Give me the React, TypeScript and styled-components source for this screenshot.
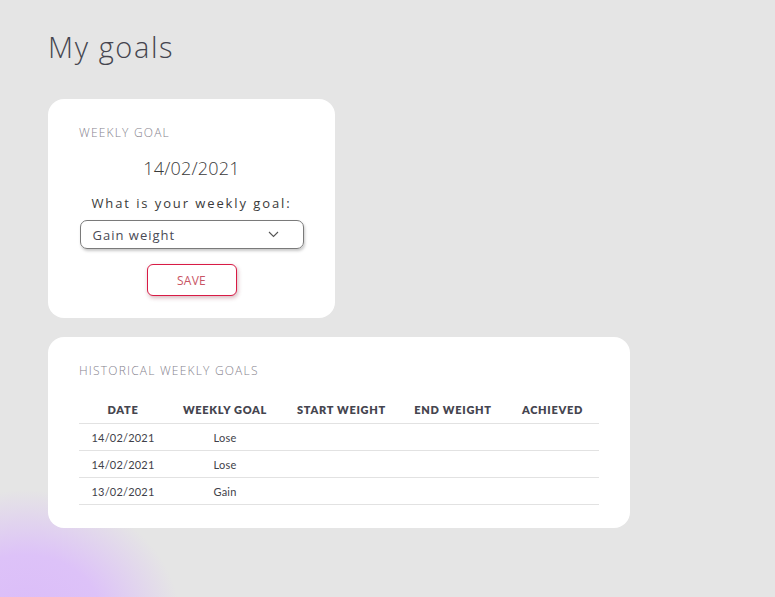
import styled, { createGlobalStyle } from "styled-components";

const GlobalStyle = createGlobalStyle`
    html, body {
        margin: 0;
        padding: 0;
        background: #e5e5e5;
    }
    body {
        font-family: "Open Sans", "Liberation Sans", sans-serif;
        color: #3f3f4a;
    }
`;

const Page = styled.div`
    position: relative;
    width: 775px;
    height: 597px;
    overflow: hidden;
    box-sizing: border-box;
    padding: 28px 0 0 48px;
    display: flex;
    flex-direction: column;
    align-items: flex-start;
`;

const Blob = styled.div`
    position: absolute;
    left: -130px;
    top: 490px;
    width: 310px;
    height: 260px;
    border-radius: 50%;
    background: radial-gradient(closest-side, #dbbcf9 0%, #ddc2f8 50%, rgba(229, 229, 229, 0) 100%);
    pointer-events: none;
`;

const Heading = styled.h1`
    margin: 0 0 33px 0;
    font-family: "Open Sans", sans-serif;
    font-weight: 300;
    font-size: 29px;
    letter-spacing: 1.6px;
    line-height: 38px;
    color: #45454f;
`;

const Card = styled.div<{ $width: number; $bottom: number }>`
    position: relative;
    z-index: 1;
    width: ${p => p.$width}px;
    box-sizing: border-box;
    background: #ffffff;
    border-radius: 16px;
    padding: 26px 31px ${p => p.$bottom}px 31px;
    margin-bottom: 19px;
`;

const CardLabel = styled.div`
    font-size: 12px;
    font-weight: 300;
    letter-spacing: 1.2px;
    color: #86838e;
    line-height: 16px;
`;

const GoalForm = styled.div`
    display: flex;
    flex-direction: column;
    align-items: center;
`;

const DateText = styled.div`
    margin-top: 14px;
    font-size: 18px;
    font-weight: 300;
    letter-spacing: 0.2px;
    color: #3a3a3a;
    line-height: 26px;
`;

const Question = styled.div`
    margin-top: 13px;
    font-size: 13px;
    letter-spacing: 1.9px;
    color: #3a3a3a;
    line-height: 18px;
`;

const Select = styled.div`
    margin-top: 8px;
    width: 224px;
    height: 29px;
    box-sizing: border-box;
    border: 1px solid #7a7a7a;
    border-radius: 7px;
    box-shadow: 1px 2px 3px rgba(0, 0, 0, 0.22);
    display: flex;
    align-items: center;
    justify-content: space-between;
    padding: 0 24px 0 12px;
    font-size: 13px;
    letter-spacing: 1px;
    color: #4a4a55;
`;

const SaveButton = styled.button`
    margin-top: 15px;
    width: 90px;
    height: 32px;
    background: #ffffff;
    border: 1px solid #d81b45;
    border-radius: 6px;
    box-shadow: 1px 2px 4px rgba(120, 20, 40, 0.3);
    font-family: "Open Sans", sans-serif;
    font-size: 12px;
    color: #c95565;
    letter-spacing: 0.3px;
    cursor: pointer;
`;

const Table = styled.table`
    margin-top: 19px;
    width: 520px;
    border-collapse: collapse;
    table-layout: fixed;
`;

const HeadCell = styled.th<{ $width: number }>`
    width: ${p => p.$width}px;
    font-family: Lato, sans-serif;
    font-weight: 800;
    font-size: 11px;
    letter-spacing: 0.7px;
    color: #45454f;
    text-align: center;
    height: 22px;
    padding: 0 0 3px 0;
    border-bottom: 1px solid #e2e2e2;
`;

const Cell = styled.td`
    font-family: Lato, sans-serif;
    font-size: 11px;
    letter-spacing: 0.2px;
    color: #3f3f4a;
    text-align: center;
    height: 26px;
    padding: 0;
    border-bottom: 1px solid #e2e2e2;
`;

const Chevron = () => (
    <svg width="11" height="7" viewBox="0 0 11 7" fill="none">
        <path d="M1 1 L5.5 5.5 L10 1" stroke="#555" strokeWidth="1.1" />
    </svg>
);

const columns = [
    { title: "DATE", width: 88 },
    { title: "WEEKLY GOAL", width: 116 },
    { title: "START WEIGHT", width: 117 },
    { title: "END WEIGHT", width: 106 },
    { title: "ACHIEVED", width: 93 },
];

const history = [
    { date: "14/02/2021", goal: "Lose" },
    { date: "14/02/2021", goal: "Lose" },
    { date: "13/02/2021", goal: "Gain" },
];

export default function App() {
    return (
        <>
            <GlobalStyle />
            <Page>
                <Blob />
                <Heading>My goals</Heading>
                <Card $width={287} $bottom={22}>
                    <CardLabel>WEEKLY GOAL</CardLabel>
                    <GoalForm>
                        <DateText>14/02/2021</DateText>
                        <Question>What is your weekly goal:</Question>
                        <Select>
                            <span>Gain weight</span>
                            <Chevron />
                        </Select>
                        <SaveButton>SAVE</SaveButton>
                    </GoalForm>
                </Card>
                <Card $width={582} $bottom={23}>
                    <CardLabel>HISTORICAL WEEKLY GOALS</CardLabel>
                    <Table>
                        <thead>
                            <tr>
                                {columns.map(c => (
                                    <HeadCell key={c.title} $width={c.width}>{c.title}</HeadCell>
                                ))}
                            </tr>
                        </thead>
                        <tbody>
                            {history.map((row, i) => (
                                <tr key={i}>
                                    <Cell>{row.date}</Cell>
                                    <Cell>{row.goal}</Cell>
                                    <Cell></Cell>
                                    <Cell></Cell>
                                    <Cell></Cell>
                                </tr>
                            ))}
                        </tbody>
                    </Table>
                </Card>
            </Page>
        </>
    );
}
